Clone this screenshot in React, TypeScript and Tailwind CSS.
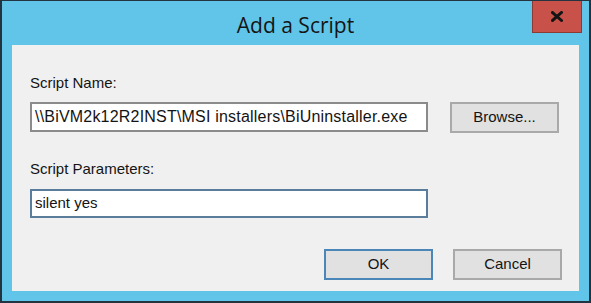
import React from "react";

export default function App() {
  const sans = { fontFamily: '"Liberation Sans", Arial, sans-serif' };
  return (
    <div className="w-[591px] h-[303px] bg-[#60c5e8] border-[#22343f] border-l-2 border-r-2 border-b-2 border-t flex flex-col relative overflow-hidden">
      <div className="h-[44px] shrink-0 flex items-center justify-center relative">
        <span
          className="text-[21px] text-[#151515] leading-none pt-[4px]"
          style={{ fontFamily: '"Open Sans", "Noto Sans", sans-serif' }}
        >
          Add a Script
        </span>
        <div className="absolute right-[7px] top-[-1px] w-[50px] h-[33px] bg-[#c85249] border border-[#8c3b34] flex items-center justify-center">
          <svg width="12" height="11" viewBox="0 0 12 11">
            <path d="M1.5 1.5 L10.5 9.5 M10.5 1.5 L1.5 9.5" stroke="#141414" strokeWidth="3" strokeLinecap="square" />
          </svg>
        </div>
      </div>
      <div
        className="flex-1 mx-[10px] mb-[10px] bg-[#f0f0f0] flex flex-col pl-[18px] pr-[17px] pt-[29px] text-[15px] text-[#141414]"
        style={sans}
      >
        <div className="h-[18px] leading-[18px] mb-[10px]">Script Name:</div>
        <div className="flex gap-[22px] items-start">
          <div className="w-[398px] h-[30px] bg-white border-2 border-[#8b8b8b] flex items-center pl-[3px] whitespace-nowrap overflow-hidden text-[16px] tracking-[0.2px]">
            \\BiVM2k12R2INST\MSI installers\BiUninstaller.exe
          </div>
          <div className="w-[109px] h-[31px] bg-[#e1e1e1] border-2 border-[#a9a9a9] flex items-center justify-center">
            Browse...
          </div>
        </div>
        <div className="h-[18px] leading-[18px] mt-[27px] mb-[11px]">Script Parameters:</div>
        <div className="w-[398px] h-[29px] bg-white border-2 border-[#5a7d9c] flex items-center pl-[3px]">
          silent yes
        </div>
        <div className="flex justify-end gap-[20px] mt-[31px]">
          <div className="w-[109px] h-[31px] bg-[#e1e1e1] border-2 border-[#4a87b8] flex items-center justify-center">
            OK
          </div>
          <div className="w-[109px] h-[31px] bg-[#e1e1e1] border-2 border-[#a9a9a9] flex items-center justify-center">
            Cancel
          </div>
        </div>
      </div>
    </div>
  );
}
